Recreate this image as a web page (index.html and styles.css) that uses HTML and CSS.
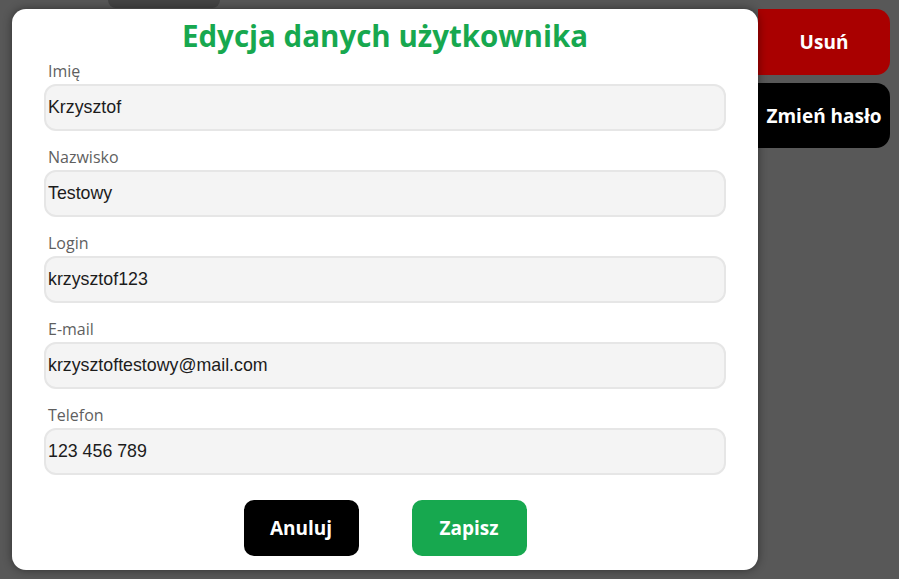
FILE: index.html
```html
<!DOCTYPE html>
<html lang="pl">
<head>
<meta charset="utf-8">
<title>Edycja danych użytkownika</title>
<link rel="stylesheet" href="styles.css">
</head>
<body>
<div class="page">
  <div class="topbar"><div class="tab"></div></div>
  <div class="stage">
    <form class="modal">
      <h1 class="title">Edycja danych użytkownika</h1>
      <div class="fields">
        <label class="field">
          <span class="label">Imię</span>
          <input class="input" type="text" value="Krzysztof">
        </label>
        <label class="field">
          <span class="label">Nazwisko</span>
          <input class="input" type="text" value="Testowy">
        </label>
        <label class="field">
          <span class="label">Login</span>
          <input class="input" type="text" value="krzysztof123">
        </label>
        <label class="field">
          <span class="label">E-mail</span>
          <input class="input" type="text" value="krzysztoftestowy@mail.com">
        </label>
        <label class="field">
          <span class="label">Telefon</span>
          <input class="input" type="text" value="123 456 789">
        </label>
      </div>
      <div class="actions">
        <button type="button" class="btn btn-dark">Anuluj</button>
        <button type="button" class="btn btn-green">Zapisz</button>
      </div>
    </form>
    <div class="side">
      <button type="button" class="side-btn side-red">Usuń</button>
      <button type="button" class="side-btn side-dark">Zmień hasło</button>
    </div>
  </div>
</div>
</body>
</html>
```

FILE: styles.css
```css
* { box-sizing: border-box; }
html, body { margin: 0; padding: 0; }
body {
  background: #585858;
  width: 899px;
  height: 579px;
  overflow: hidden;
  font-family: "Open Sans", "Liberation Sans", sans-serif;
}
.page { display: flex; flex-direction: column; }
.topbar { height: 9px; }
.tab {
  margin-left: 108px;
  width: 112px;
  height: 8px;
  background: #444444;
  border-radius: 0 0 10px 10px;
}
.stage { display: flex; align-items: flex-start; padding-left: 12px; }
.modal {
  position: relative;
  z-index: 2;
  width: 746px;
  height: 561px;
  background: #ffffff;
  border-radius: 14px;
  box-shadow: 0 0 10px rgba(0, 0, 0, 0.45);
  padding: 0 32px;
  display: flex;
  flex-direction: column;
}
.title {
  margin: 9px 0 7px;
  height: 36px;
  line-height: 36px;
  font-size: 29.5px;
  font-weight: 700;
  color: #17a84f;
  text-align: center;
}
.fields { display: flex; flex-direction: column; gap: 16px; }
.field { display: flex; flex-direction: column; gap: 3px; }
.label {
  display: block;
  height: 20px;
  line-height: 20px;
  padding-left: 4px;
  font-size: 16px;
  color: #5f5f5f;
}
.input {
  height: 47px;
  width: 100%;
  border: 2px solid #e6e6e6;
  border-radius: 12px;
  background: #f4f4f4;
  padding: 0 2px;
  font-family: "Liberation Sans", Arial, sans-serif;
  font-size: 17.8px;
  color: #1c1c1c;
  outline: none;
}
.actions {
  display: flex;
  justify-content: center;
  gap: 53px;
  margin-top: 25px;
}
.btn {
  width: 115px;
  height: 56px;
  border: none;
  border-radius: 10px;
  color: #ffffff;
  font-family: "Open Sans", "Liberation Sans", sans-serif;
  font-size: 19px;
  font-weight: 700;
}
.btn-dark { background: #000000; }
.btn-green { background: #17a84f; }
.side { display: flex; flex-direction: column; gap: 8px; }
.side-btn {
  width: 132px;
  border: none;
  border-radius: 0 14px 14px 0;
  color: #ffffff;
  font-family: "Open Sans", "Liberation Sans", sans-serif;
  font-size: 19px;
  font-weight: 700;
  padding: 0;
}
.side-red { background: #a90000; height: 66px; }
.side-dark { background: #000000; height: 65px; }
```
